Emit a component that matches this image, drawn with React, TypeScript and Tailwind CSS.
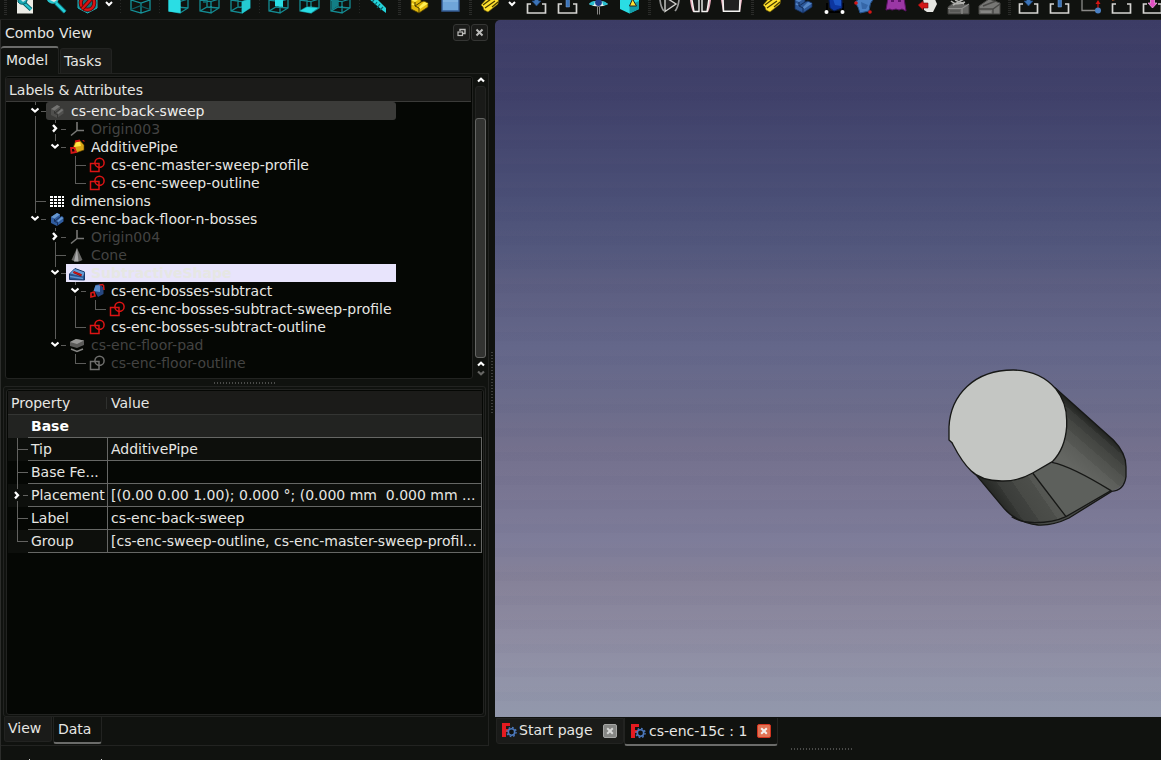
import React from "react";

type Cell = " " | "|" | "T" | "L" | "v" | "V" | ">";

const CHEVRON_DOWN = "M6.5 6.5 L10 9.5 L13.5 6.5";

function Guide({ kind }: { kind: Cell }) {
  const arrow = kind === "v" || kind === "V" || kind === ">";
  return (
    <svg width="20" height="18" viewBox="0 0 20 18" className="shrink-0 overflow-visible" shapeRendering="crispEdges">
      <g fill="#5c5c5a">
        {(kind === "|" || kind === "T") && <rect x="10" y="0" width="1" height="18" />}
        {kind === "L" && <rect x="10" y="0" width="1" height="10" />}
        {(kind === "T" || kind === "L") && <rect x="10" y="9" width="11" height="1" />}
        {arrow && <rect x="10" y="0" width="1" height="3" />}
        {(kind === "v" || kind === ">") && <rect x="10" y="14" width="1" height="4" />}
        {arrow && <rect x="16" y="9" width="5" height="1" />}
      </g>
      {(kind === "v" || kind === "V") && (
        <path d={CHEVRON_DOWN} fill="none" stroke="#fff" strokeWidth="2.2" shapeRendering="auto" />
      )}
      {kind === ">" && <path d="M8 5 L11 8.3 L8 11.6" fill="none" stroke="#fff" strokeWidth="2.4" shapeRendering="auto" />}
    </svg>
  );
}

function TreeIcon({ name }: { name: string }) {
  const body = (a: string, b: string, c: string) => (
    <g>
      <path d="M2 6 L8 2 L11 3.5 V6 L13 5 L14.5 6.5 V10.5 L8 15 L2 12 Z" fill={a} />
      <path d="M2 6 L8 2 L11 3.5 L5.5 7.5 Z M8 10 L12.5 6 L14.5 7 L9.5 11 Z" fill={b} />
      <path d="M5.5 8 V10.5 L8.5 11.5 V15 M6 10 L11 6" stroke={c} strokeWidth="1" fill="none" />
    </g>
  );
  const sketch = (c: string) => (
    <g fill="none" stroke={c} strokeWidth="1.5">
      <rect x="1.5" y="6.5" width="8.5" height="8" />
      <circle cx="10.5" cy="5.8" r="4.6" />
    </g>
  );
  const art: Record<string, React.ReactNode> = {
    bodyGrey: body("#50504e", "#747472", "#343432"),
    bodyBlue: body("#2f5c9f", "#6798d0", "#172e5a"),
    origin: (
      <path d="M8 1 V10 M8 9.5 H15 M8 9.5 L2 14.5" fill="none" stroke="#777775" strokeWidth="1.6" />
    ),
    pipe: (
      <g>
        <path d="M4 9 L6.5 2 L11 1.5 L15 6 V11 L8 13.5 Z" fill="#d8a414" stroke="#5a4000" strokeWidth=".6" />
        <path d="M5 8 L7.5 2.5 L11 2.5 L12 7 Z" fill="#ffe744" />
        <path d="M2 9 L5.5 9 L7 13 L2.5 14 Z M6 2.5 L11 1.5" fill="none" stroke="#d51717" strokeWidth="1.8" />
        <path d="M13.5 1.5 H15 V3" stroke="#b01010" fill="none" />
      </g>
    ),
    subPipe: (
      <g>
        <path d="M5 7 L6.5 2 L11 1 L14.5 5 V11 L9 14 Z" fill="#264780" />
        <path d="M4.5 8 L6.5 2.5 L11 2 L11 9 Z" fill="#5a8dcd" />
        <path d="M2 10 L5 9 L6 13 L2 14 Z" fill="none" stroke="#d51717" strokeWidth="1.7" />
        <path d="M10.5 2 L14.5 1.5 M14.5 2 L15 7" fill="none" stroke="#d51717" strokeWidth="1.5" />
      </g>
    ),
    sketch: sketch("#dc1414"),
    sketchGrey: sketch("#6f6f6d"),
    table: (
      <g fill="#fff" shapeRendering="crispEdges">
        {[3, 6, 9, 12].map((y) =>
          [1, 5, 9, 13].map((x) => <rect key={`${x}-${y}`} x={x} y={y} width={x === 13 ? 2 : 3} height="2" />),
        )}
      </g>
    ),
    cone: (
      <g>
        <path d="M8 1 L13.5 13 Q8.5 16 2.5 13 Z" fill="#686866" />
        <path d="M8 1 L9.5 14.5 H5 Z" fill="#aaa" />
      </g>
    ),
    subShape: (
      <g>
        <path d="M.5 9 L6 3.5 L15.5 7 V15 L.5 14.5 Z" fill="#27528f" stroke="#163568" />
        <path d="M1 8.5 L6 4 L15.5 7.5 L14 11.5 Z" fill="#659cd6" />
        <path d="M4.5 7 L12.5 10.3" stroke="#8d1010" strokeWidth="2.4" />
        <path d="M4.5 7 L12.5 10.3" stroke="#d91515" strokeWidth="1.2" />
        <path d="M1 11.5 L14 13.5" stroke="#5d92ce" strokeWidth="1.5" />
      </g>
    ),
    pad: (
      <g>
        <path d="M1 5 L7 2 L15 3.5 V8 L8 11 L1 9 Z" fill="#5b5b59" />
        <path d="M1 5 L7 2 L15 3.5 L8 7 Z" fill="#979795" />
        <path d="M2 12 L8 14.5 L14 12" fill="none" stroke="#858583" strokeWidth="1.5" />
      </g>
    ),
  };
  return (
    <svg width="16" height="16" viewBox="0 0 16 16" className="ml-1 mr-1.5 shrink-0">
      {art[name]}
    </svg>
  );
}

const TREE: { g: string; icon: string; text: string; dim?: boolean; hl?: "row" | "edit" }[] = [
  { g: "v", icon: "bodyGrey", text: "cs-enc-back-sweep", hl: "row" },
  { g: "|>", icon: "origin", text: "Origin003", dim: true },
  { g: "|V", icon: "pipe", text: "AdditivePipe" },
  { g: "| T", icon: "sketch", text: "cs-enc-master-sweep-profile" },
  { g: "| L", icon: "sketch", text: "cs-enc-sweep-outline" },
  { g: "T", icon: "table", text: "dimensions" },
  { g: "V", icon: "bodyBlue", text: "cs-enc-back-floor-n-bosses" },
  { g: " >", icon: "origin", text: "Origin004", dim: true },
  { g: " T", icon: "cone", text: "Cone", dim: true },
  { g: " v", icon: "subShape", text: "SubtractiveShape", hl: "edit" },
  { g: " |v", icon: "subPipe", text: "cs-enc-bosses-subtract" },
  { g: " ||L", icon: "sketch", text: "cs-enc-bosses-subtract-sweep-profile" },
  { g: " |L", icon: "sketch", text: "cs-enc-bosses-subtract-outline" },
  { g: " V", icon: "pad", text: "cs-enc-floor-pad", dim: true },
  { g: "  L", icon: "sketchGrey", text: "cs-enc-floor-outline", dim: true },
];

function Tree() {
  return (
    <div className="flex w-[391px] flex-col pl-[20px]">
      {TREE.map((r) => (
        <div key={r.text} className="flex h-[18px] items-center">
          {r.g.split("").map((c, i) => (
            <Guide key={i} kind={c as Cell} />
          ))}
          <div
            className={`ml-px flex h-[18px] flex-1 items-center whitespace-pre leading-[18px] ${
              r.hl === "row"
                ? "rounded-[3px] bg-[#3b3b39] text-[#eeeeec]"
                : r.hl === "edit"
                  ? "bg-[#e8e4fc] font-bold text-[#e6e7e3]"
                  : r.dim
                    ? "text-[#434342]"
                    : "text-[#e6e6e3]"
            }`}
          >
            <div className="-ml-px flex items-center">
              <TreeIcon name={r.icon} />
              <span>{r.text}</span>
            </div>
          </div>
        </div>
      ))}
    </div>
  );
}

function ToolArt({ name }: { name: string }) {
  const cube = (
    <g fill="none" stroke="#13868d" strokeWidth="1.3">
      <path d="M6 -2 V10 L16 13 L25 10 V-2 M6 0 L16 3 L25 0 M16 3 V13" stroke="#159299" />
      <path d="M6 9.5 L15 6 L25 9.5" stroke="#0d5d63" />
    </g>
  );
  const box = (extra: React.ReactNode) => (
    <g>
      <path
        d="M6 0 L17 1.5 V13 L6 11 Z M17 1.5 L25 -1 V8 L17 13 M6 11 L13 7 L25 8 M13 7 V-1"
        fill="none"
        stroke="#148b92"
        strokeWidth="1.3"
      />
      {extra}
    </g>
  );
  const tray = <path d="M10 4 H6.5 V13 H24.5 V4 H21" fill="none" stroke="#d5d5d2" strokeWidth="1.7" />;
  const tag = (
    <g>
      <path d="M6 5 L14 -4 L24 -3 L23 4 L13 12 L9 10 L8 7 Z" fill="#ffe12f" stroke="#6d5a00" strokeWidth=".6" />
      <path d="M8 5 L16 -1 M10 8 L20 1 M17 7 L23 2" stroke="#4a3d00" strokeWidth="1.3" />
    </g>
  );
  const part = (a: string, b: string, c: string) => (
    <g>
      <path d="M7 0 L13 -4 L17 -2 V2 L20 1 L24 3 V7 L15 13 L7 9 Z" fill={a} stroke={c} strokeWidth=".8" />
      <path d="M7 0 L13 -4 L17 -2 L11 2 Z M15 7 L20 2 L24 3.5 L16 9 Z M8 3 L11 4.5 L10 5.5 L7.5 4.5 Z" fill={b} />
      <path d="M11 2 V6 L15 8 V13 M11 6 L17 2" stroke={c} fill="none" />
    </g>
  );
  const art: Record<string, React.ReactNode> = {
    doc: (
      <g>
        <path d="M7 -2 H23 V13.5 H7 Z" fill="#edede7" />
        <path d="M14 3 L21 9.5" stroke="#07616b" strokeWidth="4" />
        <path d="M14 3 L21 9.5" stroke="#26c5ce" strokeWidth="2.2" />
        <path d="M8 -2 V2 Q11 6 16 3 L18 -2 Z" fill="#19a9b5" stroke="#07616b" />
        <path d="M11 0 L16 0 L13 2 Z" fill="#c8eaea" />
      </g>
    ),
    zoom: (
      <g>
        <path d="M15 3 L24 12" stroke="#07616b" strokeWidth="4.4" />
        <path d="M15 3 L24 12" stroke="#26d0d8" strokeWidth="2.6" />
        <path d="M5 -2 Q8 6 16 3 L19 -3 Z" fill="#26c5ce" />
        <path d="M9 0 H16 L13 2 Z" fill="#deeeee" />
      </g>
    ),
    none: (
      <g>
        <path d="M6 -4 H25 V8 L15.5 13 L6 8 Z" fill="#117c85" stroke="#22b5be" />
        <circle cx="15.5" cy="3" r="6.8" fill="#177078" stroke="#500808" strokeWidth="4" />
        <circle cx="15.5" cy="3" r="6.8" fill="none" stroke="#d91313" strokeWidth="2.4" />
        <path d="M10 9 L20 -2" stroke="#500808" strokeWidth="4" />
        <path d="M10 9 L20 -2" stroke="#d91313" strokeWidth="2.4" />
      </g>
    ),
    axo: cube,
    front: box(<path d="M5.5 -1 L17.5 0 V13 L5.5 11.5 Z" fill="#2adde4" />),
    top: box(<path d="M9 2 H13 M17 2 V5" stroke="#0d6a70" strokeWidth="1.5" />),
    right: box(<path d="M17 1.5 L25 -1 V8 L17 13.5 Z" fill="#24cbd2" />),
    rear: box(<path d="M12 -1 H20 V7 L12 6 Z" fill="#2adde4" />),
    bottom: box(<path d="M6 11 L13 7 L24 8 L17 13 Z" fill="#2adde4" />),
    left: box(<path d="M7 -1 H13 V6 L7 10 Z" fill="#127e85" />),
    ruler: (
      <g>
        <path d="M5 -2 L12 -3 L23 8 V13 L19 10 Z" fill="#24d3da" />
        <path d="M11 0 L9 2 M14 2 L12 5 M17 4 L14 8 M20 7 L17 10" stroke="#08646a" strokeWidth="1.2" />
      </g>
    ),
    yellowPart: part("#e0b80a", "#ffee50", "#4b3c00"),
    folder: (
      <g>
        <path d="M7 -3 H24 V11 H7 Z" fill="#6fa5d9" stroke="#335b93" strokeWidth="1.4" />
        <path d="M8 1 H23" stroke="#91bee6" />
      </g>
    ),
    tag,
    trayDown: (
      <g>
        {tray}
        <path d="M13.5 -2 H17.5 V1 H20 L15.5 6 L11 1 H13.5 Z" fill="#3c74b8" stroke="#1e4679" strokeWidth=".7" />
      </g>
    ),
    trayUp: (
      <g>
        {tray}
        <path d="M14 -2 H17.5 V7 H14 Z" fill="#3c74b8" stroke="#7aa6da" strokeWidth=".5" />
      </g>
    ),
    eye: (
      <g>
        <path d="M6 4 Q15 -3 25 4 Q15 9 6 4 Z" fill="#e9f3f3" />
        <path d="M6 4 Q8 1 12 1 L11 5 Q8 6 6 4 Z M25 4 Q22 1 19 1 L20 5 Q23 6 25 4 Z" fill="#26bfd0" />
        <circle cx="15.5" cy="2.5" r="3.4" fill="#1d3c8a" />
        <path d="M14.5 7 V14.5 M16.5 7 V14.5" stroke="#a5a5a3" strokeWidth=".8" />
      </g>
    ),
    texture: (
      <g>
        <path d="M6 -2 H25 V9 L15.5 13.5 L6 9 Z" fill="#2adde4" />
        <path d="M15.5 5 L25 1 V9 L15.5 13.5 Z" fill="#139da8" />
        <path d="M18.5 -1 L22.5 6 H15.5 Z" fill="#ffe12f" stroke="#222" strokeWidth="1" />
      </g>
    ),
    play: (
      <g fill="none">
        <path d="M11 -4 V11.5 L22 4 L11 -3" fill="#202020" stroke="#cfcfcc" strokeWidth="1.4" />
        <path d="M6 0 Q7 8 10 11 M25 0 Q24 8 21 11" stroke="#999" strokeWidth="1.7" />
      </g>
    ),
    pause: (
      <g>
        <path d="M5 0 H26 Q25 8 23 12 H8 Q6 8 5 0 Z" fill="#e9a9bb" />
        <path d="M14 0 H17 V12 H14 Z" fill="#171717" />
        <path d="M7 -2 H14 V11.5 H9 Q8 6 7 0 Z M17 -2 H24 Q23 6 22 11.5 H17 Z" fill="#1b1b1b" stroke="#f3f3f1" strokeWidth="1.4" />
      </g>
    ),
    stop: (
      <g>
        <path d="M5 0 H26 L24 12 H7 Z" fill="#e9a9bb" />
        <path d="M7 -2 H24 L23.5 11.3 H7.5 Z" fill="#202020" stroke="#f3f3f1" strokeWidth="1.5" />
      </g>
    ),
    bluePart: part("#2c5798", "#5586c6", "#132d5a"),
    binder: (
      <g>
        <path d="M8 12 V3 M8 12 H24 M24 12 V3" stroke="#000" strokeWidth="2" />
        <path d="M10 0 L15 -3 L23 0 V8 L15 11 L11 8 Z" fill="#0d36a0" stroke="#061b58" />
        <path d="M14 -1 L22 0 V6 L16 5 Z" fill="#1c55c4" />
        <circle cx="7.5" cy="12" r="2" fill="#fff" />
        <circle cx="23.5" cy="12" r="2" fill="#fff" />
      </g>
    ),
    shape: (
      <g>
        <path d="M5 2 L12 -3 H25 Q19 3 19 11 L10 13 Q9 8 5 2 Z" fill="#4a80c4" stroke="#214e87" />
        <path d="M11 2 L18 5 L16 9 L12 9 Z" fill="#3566a8" />
        <circle cx="6" cy="3" r="1.8" fill="#d51515" />
        <circle cx="20" cy="12" r="1.8" fill="#d51515" />
      </g>
    ),
    ghost: (
      <g>
        <path d="M7 -2 H23 L25 11 L21 9 L18 10 L15 9 L11 10 L9 9 L5 10 Z" fill="#9b37a5" stroke="#5e1268" />
        <path d="M10 1 H13 M17 1 H20" stroke="#5e1268" strokeWidth="2" />
      </g>
    ),
    clone: (
      <g>
        <path d="M11 -3 H22 L25 4 L21 12 H15 L12 10 Z" fill="#e6e6e2" />
        <path d="M6 5 L11 1 V3 H16 V8 H11 V10 Z" fill="#d31717" stroke="#6c0b0b" strokeWidth=".6" />
      </g>
    ),
    greyA: (
      <g>
        <path d="M5 7 L10 3 L26 5 V14 H5 Z" fill="#666664" stroke="#3c3c3a" />
        <path d="M5 8.5 H19 L26 4 M19 8.5 V14" stroke="#8f8f8d" strokeWidth="1.2" fill="none" />
        <path d="M8 1 Q13 6 22 2 M21 -1 L10 5 M12 0 L21 4" stroke="#b1b1ae" strokeWidth="1.6" fill="none" />
        <path d="M7 11 H17" stroke="#4a4a48" />
      </g>
    ),
    greyB: (
      <g>
        <path d="M5 6 L15 -1 L26 3 V14 H5 Z" fill="#777775" stroke="#464644" />
        <path d="M5 9 H19 L26 4 M19 9 V14 M9 6 L22 1" stroke="#484846" strokeWidth="1.4" fill="none" />
        <path d="M7 12 H17" stroke="#969694" />
      </g>
    ),
    axis: (
      <g>
        <path d="M7 -2 V10.5 H21" fill="none" stroke="#8a8a88" strokeWidth="1.3" />
        <path d="M23 8 V2" stroke="#a91111" strokeWidth="1.6" />
        <path d="M23 0 L25.5 4 H20.5 Z" fill="#d51515" />
        <circle cx="23" cy="10.5" r="3" fill="#4a80c4" />
      </g>
    ),
    trayRed: (
      <g>
        {tray}
        <path d="M6 0 L9 -1" stroke="#9c4822" strokeWidth="2" />
      </g>
    ),
    trayPink: (
      <g>
        {tray}
        <path d="M13.5 -2 H17.5 V3 H20 L15.5 8 L11 3 H13.5 Z" fill="#e14fc2" stroke="#f4b1e5" strokeWidth=".7" />
      </g>
    ),
  };
  return (
    <svg width="31" height="15" viewBox="0 0 31 15" className="shrink-0">
      {art[name]}
    </svg>
  );
}

function Gap({ w, dotted }: { w: string; dotted?: "thin" | "wide" }) {
  return (
    <div className={`flex h-[15px] shrink-0 items-stretch justify-center ${w}`}>
      {dotted === "thin" && <div className="w-px bg-[repeating-linear-gradient(#262725_0_1px,transparent_1px_3px)]" />}
      {dotted === "wide" && <div className="w-[3px] bg-[repeating-linear-gradient(#2a2b29_0_1px,transparent_1px_2px)]" />}
    </div>
  );
}

function Drop({ w }: { w: string }) {
  return (
    <div className={`flex h-[15px] shrink-0 justify-center ${w}`}>
      <svg width="8" height="8" viewBox="0 0 8 8" className="-ml-px">
        <path d="M1 2 L4 5 L7 2" fill="none" stroke="#fff" strokeWidth="2" />
      </svg>
    </div>
  );
}

function Tools({ names }: { names: string }) {
  return (
    <>
      {names.split(" ").map((n, i) => (
        <ToolArt key={i} name={n} />
      ))}
    </>
  );
}

function Toolbar() {
  return (
    <div className="flex h-5 w-full overflow-hidden border-b border-[#1f201e]">
      <Gap w="w-[10px]" dotted="wide" />
      <Tools names="doc zoom none" />
      <Drop w="w-[13px]" />
      <Gap w="w-[9px]" dotted="thin" />
      <Tools names="axo" />
      <Gap w="w-[7px]" dotted="thin" />
      <Tools names="front top right" />
      <Gap w="w-[7px]" dotted="thin" />
      <Tools names="rear bottom left" />
      <Gap w="w-[7px]" dotted="thin" />
      <Tools names="ruler" />
      <Gap w="w-[10px]" dotted="wide" />
      <Tools names="yellowPart folder" />
      <Gap w="w-[9px]" dotted="wide" />
      <Tools names="tag" />
      <Drop w="w-[12px]" />
      <Gap w="w-[3px]" />
      <Tools names="trayDown trayUp eye texture" />
      <Gap w="w-[9px]" dotted="wide" />
      <Tools names="play pause stop" />
      <Gap w="w-[10px]" dotted="wide" />
      <Tools names="tag bluePart binder shape ghost clone greyA greyB" />
      <Gap w="w-[8px]" dotted="wide" />
      <Tools names="trayDown trayUp axis trayRed trayPink" />
    </div>
  );
}

function ScrollArrow({ up, dim }: { up?: boolean; dim?: boolean }) {
  return (
    <svg width="10" height="6" viewBox="0 0 10 6" className="shrink-0">
      <path d={up ? "M2 4.5 L5 1.8 L8 4.5" : "M2 1.5 L5 4.2 L8 1.5"} fill="none" stroke={dim ? "#666664" : "#fff"} strokeWidth="2.2" />
    </svg>
  );
}

const PROPS = [
  ["Tip", "AdditivePipe"],
  ["Base Fe...", ""],
  ["Placement", "[(0.00 0.00 1.00); 0.000 °; (0.000 mm  0.000 mm ..."],
  ["Label", "cs-enc-back-sweep"],
  ["Group", "[cs-enc-sweep-outline, cs-enc-master-sweep-profil..."],
];

function PropertyTable() {
  return (
    <div className="ml-[2px] mt-[2px] h-[326px] w-[478px] rounded-[3px] border border-[#222321] bg-[#050704] pl-px pt-px">
      <div className="flex h-6 w-[474px] items-center border-b border-[#343533] bg-[#1b1b19] pt-px">
        <span className="w-[98px] pl-[3px]">Property</span>
        <span className="h-3 w-px bg-[#2f302e]" />
        <span className="pl-1">Value</span>
      </div>
      <div className="flex h-[23px] w-[474px]">
        <div className="w-5 bg-[#222321]" />
        <div className="flex flex-1 items-center border-b border-[#666765] bg-[#222321] pl-[3px] font-bold text-white">Base</div>
      </div>
      {PROPS.map(([k, v], i) => (
        <div key={k} className={`flex h-[23px] w-[474px] whitespace-pre leading-[22px] ${i % 2 ? "bg-[#050704]" : "bg-[#0d0f0c]"}`}>
          <svg width="20" height="23" viewBox="0 0 20 23" className="shrink-0" shapeRendering="crispEdges">
            {k === "Placement" ? (
              <>
                <path d="M9.5 0 V5 M9.5 17 V23 M15 11.5 H20" stroke="#626260" />
                <path d="M7 8 L10 11.2 L7 14.4" fill="none" stroke="#fff" strokeWidth="2.3" shapeRendering="auto" />
              </>
            ) : (
              <path d={`M9.5 0 V${k === "Group" ? 12 : 23} M9 11.5 H20`} stroke="#626260" />
            )}
          </svg>
          <div className="w-[80px] shrink-0 border-b border-r border-[#666765] pl-[3px]">{k}</div>
          <div className="min-w-0 flex-1 overflow-hidden border-b border-r border-[#666765] pl-[3px]">{v}</div>
        </div>
      ))}
    </div>
  );
}

function WindowButton({ kind }: { kind: "float" | "close" }) {
  return (
    <div className="flex h-[17px] w-[17px] items-center justify-center rounded-[3px] border border-[#353634] bg-[#1a1b19]">
      <svg width="9" height="9" viewBox="0 0 9 9" fill="none" stroke="#bdbdbb">
        {kind === "float" ? (
          <>
            <path d="M3 3 V1.5 H8 V5.5 H6" strokeWidth="1.4" />
            <rect x="1" y="4" width="4.5" height="3.5" strokeWidth="1.2" />
          </>
        ) : (
          <path d="M1.5 1.5 L7.5 7.5 M7.5 1.5 L1.5 7.5" strokeWidth="2" />
        )}
      </svg>
    </div>
  );
}

function Dots({ vertical }: { vertical?: boolean }) {
  return vertical ? (
    <div className="h-[62px] w-[2px] bg-[repeating-linear-gradient(#3d3e3c_0_1px,transparent_1px_3px)]" />
  ) : (
    <div className="h-[2px] w-[62px] bg-[repeating-linear-gradient(90deg,#4a4b49_0_1px,transparent_1px_3px)]" />
  );
}

function ComboView() {
  return (
    <div className="flex h-[740px] w-[495px] shrink-0">
      <div className="w-px bg-[#2c2d2b]" />
      <div className="flex w-[488px] flex-col">
        <div className="flex h-[25px] items-center justify-between pl-1 pr-px">
          <span className="pt-px leading-[25px]">Combo View</span>
          <div className="flex gap-px">
            <WindowButton kind="float" />
            <WindowButton kind="close" />
          </div>
        </div>
        <div className="flex h-[29px] items-end">
          <div className="h-7 w-[58px] rounded-t-[3px] border-r border-t-2 border-[#222321] border-t-[#6b6c6a] pl-[5px] leading-[25px]">Model</div>
          <div className="flex flex-1 items-end border-b border-[#222321] pl-px">
            <div className="h-[25px] w-[52px] rounded-t-[3px] border border-b-0 border-[#222321] bg-[#1a1b19] pl-[3px] leading-[25px]">Tasks</div>
          </div>
        </div>
        <div className="flex h-[672px] flex-col border-r border-[#222321]">
          <div className="mt-[2px] flex h-[303px] pl-[4px]">
            <div className="h-[303px] w-[468px] overflow-hidden rounded-[3px] border border-[#222321] bg-[#050704]">
              <div className="mt-px h-6 w-[465px] border-b border-[#3b3b39] bg-[#1b1b19] pl-[3px] leading-[24px]">Labels &amp; Attributes</div>
              <div className="-ml-px">
                <Tree />
              </div>
            </div>
            <div className="-ml-px flex w-[15px] flex-col items-center pl-[2px] pt-px">
              <ScrollArrow up />
              <div className="mt-[3px] h-[272px] w-[11px] rounded-[3px] border border-[#222321] bg-[#191a18]">
                <div className="-ml-px mt-[31px] h-[240px] w-[11px] rounded-[3px] border border-[#646563] bg-[#323331]" />
              </div>
              <div className="mt-[3px] flex flex-col gap-[3px]">
                <ScrollArrow up />
                <ScrollArrow dim />
              </div>
            </div>
          </div>
          <div className="flex h-[7px] items-center justify-center pt-px">
            <Dots />
          </div>
          <div className="ml-[2px] h-[331px] w-[483px] rounded-[3px] border border-[#222321]">
            <PropertyTable />
          </div>
          <div className="flex h-[29px] items-start border-b border-[#222321] pl-[3px]">
            <div className="h-[25px] w-[48px] rounded-b-[3px] border border-t-0 border-[#222321] bg-[#1a1b19] pl-[3px] leading-[22px]">View</div>
            <div className="ml-px h-[27px] w-[49px] rounded-b-[3px] border-x border-b-2 border-[#222321] border-b-[#6b6c6a] pl-[4px] leading-[24px]">Data</div>
          </div>
        </div>
        <div className="flex h-[14px] items-end gap-[7px] pl-7">
          <span className="h-px w-px bg-[#cfcfcc]" />
          <span className="ml-[64px] h-px w-px bg-[#cfcfcc]" />
        </div>
      </div>
      <div className="flex flex-1 justify-center pt-[332px]">
        <Dots vertical />
      </div>
    </div>
  );
}

function Solid() {
  return (
    <svg width="220" height="185" viewBox="0 0 660 555" className="absolute left-[435px] top-[335px]">
      <defs>
        <linearGradient id="right" gradientUnits="userSpaceOnUse" x1="495" y1="200" x2="400" y2="310">
          <stop offset="0" stopColor="#1e201d" />
          <stop offset=".15" stopColor="#30322f" />
          <stop offset=".15" stopColor="#383a37" />
          <stop offset=".3" stopColor="#3e403d" />
          <stop offset=".3" stopColor="#444642" />
          <stop offset=".48" stopColor="#4a4c48" />
          <stop offset=".48" stopColor="#50524e" />
          <stop offset=".68" stopColor="#565854" />
          <stop offset=".68" stopColor="#5c5e5a" />
          <stop offset="1" stopColor="#646662" />
        </linearGradient>
        <linearGradient id="left" gradientUnits="userSpaceOnUse" x1="180" y1="420" x2="340" y2="310">
          <stop offset="0" stopColor="#242623" />
          <stop offset=".2" stopColor="#343633" />
          <stop offset=".2" stopColor="#3b3d3a" />
          <stop offset=".4" stopColor="#40423f" />
          <stop offset=".4" stopColor="#484a46" />
          <stop offset=".65" stopColor="#4c4e4a" />
          <stop offset=".65" stopColor="#545652" />
          <stop offset="1" stopColor="#5a5c58" />
        </linearGradient>
      </defs>
      <path d="M375 98 L550 255 Q588 294 588 335 V365 Q582 400 543 409 L370 320 Z" fill="url(#right)" />
      <path d="M130 350 L222 460 Q260 504 325 510 Q370 507 408 485 L305 350 Z" fill="url(#left)" />
      <path d="M308 354 L368 322 Q430 339 543 409 L408 486 Z" fill="#5d605c" />
      <path d="M408 486 L545 409 L417 489 Q370 512 320 511 L300 507 Q370 506 408 486 Z" fill="#484b47" />
      <g fill="none" stroke="#171816" strokeWidth="4" strokeLinejoin="round">
        <path d="M375 98 L550 255 Q588 294 588 335 V365 Q582 407 545 409 L417 489 Q370 512 325 510 Q260 504 222 460 L130 350" />
        <path d="M308 354 L408 485 L543 407 Q425 334 366 322 M408 485 Q370 503 315 503 Q270 502 245 485" />
      </g>
      <path
        d="M57 255 V215 C62 120 132 45 250 45 C312 46 352 72 378 102 C400 130 410 158 410 195 V215 C407 258 392 295 367 320 L308 354 C280 370 250 379 215 378 C175 377 142 366 123 347 C94 320 80 290 66 263 Z"
        fill="#c4c6c3"
        stroke="#171816"
        strokeWidth="4"
      />
    </svg>
  );
}

function AppLogo() {
  return (
    <svg width="15" height="15" viewBox="0 0 15 15" className="shrink-0">
      <path d="M0 0 H8 V3 H4 V6 H7 V9 H4 V14 H0 Z" fill="#e41b20" />
      <circle cx="9.5" cy="9" r="3.2" fill="#10120f" stroke="#4c79bd" strokeWidth="1.6" />
      <circle cx="9.5" cy="9" r="4.6" fill="none" stroke="#4c79bd" strokeWidth="1.3" strokeDasharray="1.7 1.91" />
    </svg>
  );
}

function TabClose({ active }: { active?: boolean }) {
  return (
    <svg width="14" height="14" viewBox="0 0 14 14" className="shrink-0">
      <rect x=".5" y=".5" width="13" height="13" rx="1.5" fill={active ? "#e17354" : "#858684"} stroke={active ? "#d3341f" : "#a5a6a4"} />
      <path d="M4.2 4.2 L9.8 9.8 M9.8 4.2 L4.2 9.8" stroke={active ? "#f2f2f0" : "#d6d7d5"} strokeWidth="2" />
    </svg>
  );
}

function Workspace() {
  return (
    <div className="flex h-[740px] flex-1 flex-col">
      <div className="relative h-[697px] overflow-hidden rounded-tl-[5px] bg-[linear-gradient(#3d3d66_0%,#40416a_11%,#4b5077_26%,#53587d_33%,#5c5e81_38%,#64678a_47%,#6b6c8b_55%,#73708d_61%,#787592_67%,#7e7d9a_75%,#858198_80%,#8d8ba1_88%,#9193a8_94%,#9298ac_100%)]">
        <div className="h-full bg-[repeating-linear-gradient(rgba(20,20,70,0.018)_0_9px,transparent_9px_18px,rgba(150,100,110,0.012)_18px_24px)]" />
        <Solid />
      </div>
      <div className="flex h-[43px] items-start pl-px pt-px">
        <div className="flex h-[26px] w-[128px] items-center rounded-b-[3px] border border-[#222321] bg-[#1a1b19] pb-px pl-[5px]">
          <AppLogo />
          <span className="ml-[2px] w-[84px]">Start page</span>
          <TabClose />
        </div>
        <div className="flex h-[28px] w-[154px] items-center rounded-b-[3px] border-x border-b-2 border-[#222321] border-b-[#6b6c6a] pl-[6px]">
          <AppLogo />
          <span className="ml-[3px] w-[108px]">cs-enc-15c : 1</span>
          <TabClose active />
        </div>
        <div className="ml-[13px] mt-[30px]">
          <Dots />
        </div>
      </div>
    </div>
  );
}

export default function App() {
  return (
    <div className="h-[760px] w-[1161px] overflow-hidden bg-[#10120f] font-['DejaVu_Sans',sans-serif] text-[14px] text-[#e6e6e3]">
      <Toolbar />
      <div className="flex">
        <ComboView />
        <Workspace />
      </div>
    </div>
  );
}
